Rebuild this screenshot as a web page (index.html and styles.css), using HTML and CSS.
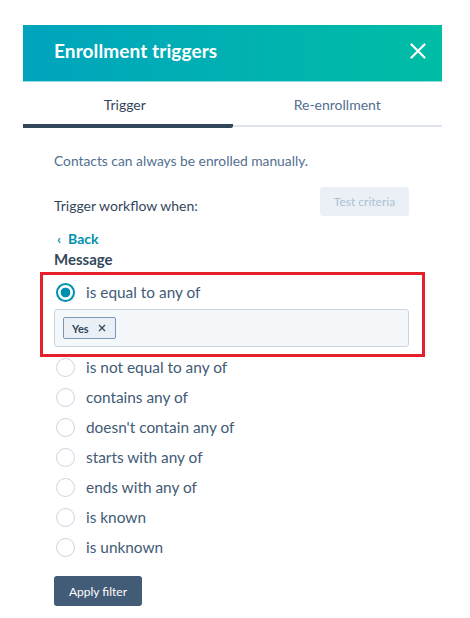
FILE: index.html
```html
<!DOCTYPE html>
<html lang="en">
<head>
<meta charset="utf-8">
<title>Enrollment triggers</title>
<link rel="stylesheet" href="styles.css">
</head>
<body>
<div class="panel">
  <div class="header">
    <h1 class="title">Enrollment triggers</h1>
    <svg class="close" width="16" height="16" viewBox="0 0 16 16" aria-hidden="true"><path d="M1.5 1.5 L14.5 14.5 M14.5 1.5 L1.5 14.5" stroke="#fff" stroke-width="2.2" stroke-linecap="round" fill="none"/></svg>
  </div>
  <div class="tabs">
    <div class="tab active">Trigger</div>
    <div class="tab">Re-enrollment</div>
  </div>
  <div class="content">
    <p class="note">Contacts can always be enrolled manually.</p>
    <div class="when-row">
      <span class="when">Trigger workflow when:</span>
      <button class="test-btn">Test criteria</button>
    </div>
    <div class="back"><span class="chev">‹</span>Back</div>
    <div class="prop">Message</div>
    <div class="highlight">
      <div class="radio-row">
        <span class="radio checked"></span>
        <span class="label">is equal to any of</span>
      </div>
      <div class="value-input">
        <span class="tag">Yes <svg class="tag-x" width="8" height="8" viewBox="0 0 8 8" aria-hidden="true"><path d="M1 1 L7 7 M7 1 L1 7" stroke="#33475b" stroke-width="1.3" fill="none"/></svg></span>
      </div>
    </div>
    <div class="radio-row"><span class="radio"></span><span class="label">is not equal to any of</span></div>
    <div class="radio-row"><span class="radio"></span><span class="label">contains any of</span></div>
    <div class="radio-row"><span class="radio"></span><span class="label">doesn't contain any of</span></div>
    <div class="radio-row"><span class="radio"></span><span class="label">starts with any of</span></div>
    <div class="radio-row"><span class="radio"></span><span class="label">ends with any of</span></div>
    <div class="radio-row"><span class="radio"></span><span class="label">is known</span></div>
    <div class="radio-row"><span class="radio"></span><span class="label">is unknown</span></div>
    <button class="apply-btn">Apply filter</button>
  </div>
</div>
</body>
</html>
```
FILE: styles.css
```css
* { box-sizing: border-box; }
html, body { margin: 0; padding: 0; background: #fff; }
body { font-family: Lato, "Open Sans", sans-serif; color: #33475b; }

.panel {
  width: 419px;
  margin: 25px 0 0 23px;
}

.header {
  height: 57px;
  display: flex;
  align-items: center;
  justify-content: space-between;
  padding: 0 16px 5px 31px;
  background: linear-gradient(to right, #00a4bd, #00bda5);
  border-bottom: 1px solid #8fd9df;
}
.title {
  margin: 0;
  font-size: 19px;
  font-weight: 700;
  color: #fff;
  letter-spacing: 0.1px;
}
.close { display: block; }

.tabs {
  display: flex;
  background: linear-gradient(#dfe3eb, #dfe3eb) left bottom 1px / 100% 2px no-repeat;
}
.tab {
  flex: 1 1 0;
  text-align: center;
  font-size: 14px;
  line-height: 20px;
  padding: 13px 0 9px;
  color: #516f90;
  border-bottom: 4px solid transparent;
}
.tab.active {
  color: #33475b;
  border-bottom-color: #33475b;
  border-radius: 0 0 2px 0;
  text-indent: -6px;
}

.content {
  padding: 24px 33px 0 31px;
}
.note {
  margin: 0;
  font-size: 13.8px;
  line-height: 18px;
  color: #516f90;
}
.when-row {
  display: flex;
  align-items: flex-end;
  justify-content: space-between;
  margin-top: 17px;
}
.when {
  font-size: 14px;
  line-height: 20px;
}
.test-btn {
  width: 89px;
  height: 29px;
  border: 0;
  border-radius: 3px;
  background: #eaf0f6;
  color: #b0c1d4;
  font-family: inherit;
  font-size: 12px;
  padding: 0;
}
.back {
  margin-top: 14px;
  font-size: 14px;
  line-height: 18px;
  font-weight: 700;
  color: #0091ae;
}
.chev { font-size: 14px; margin: 0 7px 0 3px; }
.prop {
  margin-top: 1px;
  font-size: 15px;
  line-height: 20px;
  font-weight: 700;
  color: #33475b;
}

.highlight {
  margin: 3px -16px -5px -14px;
  border: 3px solid #e5202a;
  padding: 2px 13px 7px 11px;
}

.radio-row {
  display: flex;
  align-items: center;
  height: 30px;
}
.radio {
  width: 19px;
  height: 19px;
  border: 1.5px solid #cbd6e2;
  border-radius: 50%;
  margin-left: 2px;
  margin-right: 11px;
  background: #fff;
  flex: none;
}
.radio.checked {
  border: 2px solid #0091ae;
  background: radial-gradient(circle, #0091ae 0, #0091ae 4.5px, #fff 5.2px);
}
.label {
  font-size: 15.4px;
  line-height: 20px;
  color: #425b76;
}

.value-input {
  margin-top: 2px;
  height: 38px;
  background: #f5f8fa;
  border: 1px solid #cbd6e2;
  border-radius: 3px;
  padding: 7px 8px;
  display: flex;
  align-items: center;
}
.tag {
  display: inline-flex;
  align-items: center;
  height: 22px;
  padding: 0 9px 0 8px;
  background: #eaf0f6;
  border: 1px solid #7c98b6;
  border-radius: 2px;
  font-size: 11px;
  font-weight: 700;
  color: #33475b;
}
.tag-x { margin-left: 9px; }

.apply-btn {
  margin-top: 14px;
  width: 88px;
  height: 30px;
  border: 0;
  border-radius: 3px;
  background: #425b76;
  color: #fff;
  font-family: inherit;
  font-size: 12px;
  padding: 0;
}
```
